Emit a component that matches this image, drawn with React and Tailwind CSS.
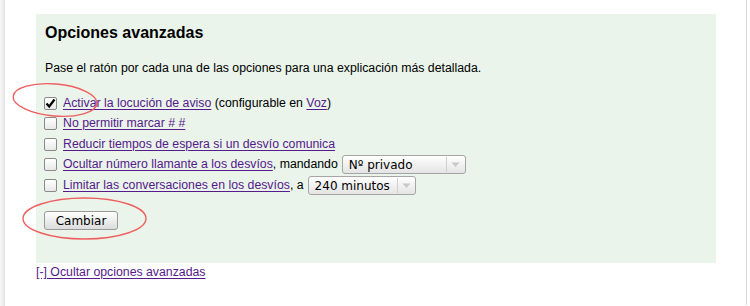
import React from 'react';

const linkCls = 'text-[#551a8b] underline underline-offset-[2px] decoration-[#551a8b]';

const Check = ({ checked }) => (
    <span className="w-[13px] h-[13px] shrink-0 border border-[#8a8a8a] rounded-[2px] bg-gradient-to-b from-white to-[#e8e8e8] flex items-center justify-center">
        {checked && (
            <svg width="11" height="11" viewBox="0 0 11 11">
                <path d="M1.5 5.5 L4.2 8.5 L9.5 1.5" fill="none" stroke="#000" strokeWidth="2.2" />
            </svg>
        )}
    </span>
);

const Select = ({ label, width, textWidth }) => (
    <span
        className={`inline-flex items-center h-[19px] ${width} border border-[#a5a5a5] rounded-[3px] bg-gradient-to-b from-white to-[#e4e4e4] font-['DejaVu_Sans',sans-serif] text-[12px] text-black`}
    >
        <span className={`${textWidth} pl-[6px] leading-none`}>{label}</span>
        <span className="h-[15px] w-px bg-[#d0d0d0]" />
        <span className="flex-1 flex items-center justify-center">
            <svg width="9" height="6" viewBox="0 0 9 6">
                <path d="M0.5 0.5 L8.5 0.5 L4.5 5 Z" fill="#c8c8c8" />
            </svg>
        </span>
    </span>
);

const App = () => {
    return (
        <div className="relative w-[750px] h-[306px] bg-white flex overflow-hidden font-['Liberation_Sans',Arial,sans-serif]">
            {/* left shadow strip */}
            <div className="w-[5px] h-full bg-gradient-to-r from-[#f8f8f8] to-[#e4e4e4]" />

            {/* page body */}
            <div className="w-[741px] pl-[31px] pt-[14px]">
                <div className="w-[680px] h-[249px] bg-[#eaf4ea] pl-[9px] pt-[9px]">
                    <h2 className="text-[16px] font-bold text-black leading-[18px] mt-[1px]">Opciones avanzadas</h2>
                    <p className="text-[12.3px] text-black mt-[19px] leading-[15px]">
                        Pase el ratón por cada una de las opciones para una explicación más detallada.
                    </p>

                    <div className="mt-[17px] ml-[-1px] flex flex-col text-[12.3px] text-black leading-[15px]">
                        <div className="flex items-center gap-[6px] h-[20px]">
                            <Check checked />
                            <span>
                                <a className={linkCls}>Activar la locución de aviso</a> (configurable en <a className={linkCls}>Voz</a>)
                            </span>
                        </div>
                        <div className="flex items-center gap-[6px] h-[21px]">
                            <Check />
                            <a className={linkCls}>No permitir marcar # #</a>
                        </div>
                        <div className="flex items-center gap-[6px] h-[20px]">
                            <Check />
                            <a className={linkCls}>Reducir tiempos de espera si un desvío comunica</a>
                        </div>
                        <div className="flex items-center gap-[6px] h-[21px]">
                            <Check />
                            <span className="flex items-center">
                                <a className={linkCls}>Ocultar número llamante a los desvíos</a>
                                <span className="mr-[4px]">, mandando</span>
                                <Select label="Nº privado" width="w-[124px]" textWidth="w-[103px]" />
                            </span>
                        </div>
                        <div className="flex items-center gap-[6px] h-[21px]">
                            <Check />
                            <span className="flex items-center">
                                <a className={linkCls}>Limitar las conversaciones en los desvíos</a>
                                <span className="mr-[4px]">, a</span>
                                <Select label="240 minutos" width="w-[108px]" textWidth="w-[88px]" />
                            </span>
                        </div>
                    </div>

                    <button className="mt-[15px] ml-[-1px] w-[74px] h-[19px] border border-[#9a9a9a] rounded-[3px] bg-gradient-to-b from-white to-[#dcdcdc] font-['DejaVu_Sans',sans-serif] text-[12px] text-black leading-none">
                        Cambiar
                    </button>
                </div>

                <div className="mt-[2px] text-[12.3px] leading-[15px]">
                    <a className={linkCls}>[-] Ocultar opciones avanzadas</a>
                </div>
            </div>

            {/* right edge line */}
            <div className="w-px h-[305px] bg-[#d6d6d6]" />

            {/* red annotation ellipses */}
            <svg className="absolute inset-0 pointer-events-none" width="750" height="306">
                <ellipse cx="55" cy="100" rx="42" ry="16" transform="rotate(5 55 100)" fill="none" stroke="#ee5f5f" strokeWidth="1.4" />
                <ellipse cx="84.5" cy="218.5" rx="61.5" ry="20.5" fill="none" stroke="#ee5f5f" strokeWidth="1.4" />
            </svg>
        </div>
    );
};

export default App;
